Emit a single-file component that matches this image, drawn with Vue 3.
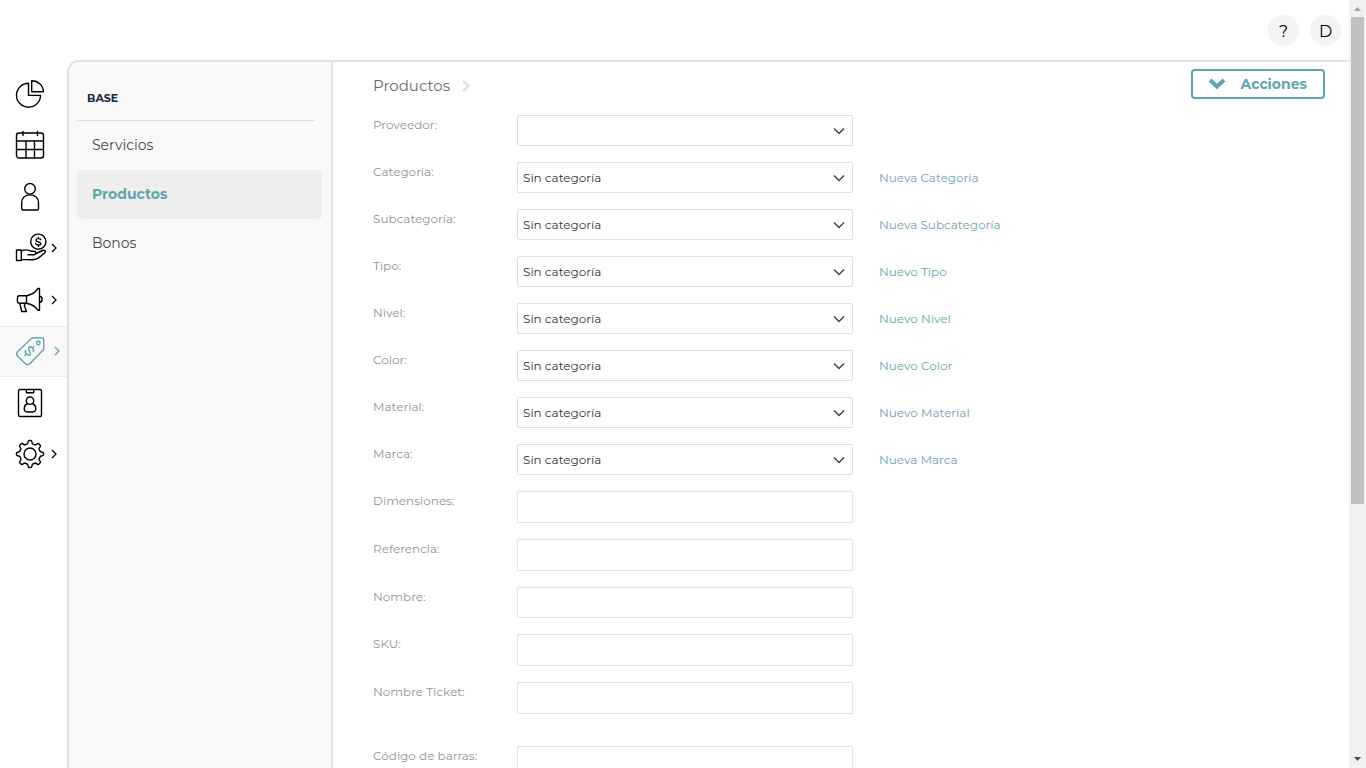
<script setup>
import { ref } from 'vue'

const railItems = [
  { id: 'stats', label: 'Estadísticas' },
  { id: 'calendar', label: 'Agenda' },
  { id: 'clients', label: 'Clientes' },
  { id: 'sales', label: 'Ventas', more: true },
  { id: 'marketing', label: 'Marketing', more: true },
  { id: 'catalog', label: 'Catálogo', more: true, active: true },
  { id: 'staff', label: 'Personal' },
  { id: 'settings', label: 'Configuración', more: true },
]

const menu = [
  { label: 'Servicios' },
  { label: 'Productos', active: true },
  { label: 'Bonos' },
]

const selects = ref([
  { id: 'proveedor', label: 'Proveedor:', value: '' },
  { id: 'categoria', label: 'Categoria:', value: 'Sin categoría', link: 'Nueva Categoria' },
  { id: 'subcategoria', label: 'Subcategoría:', value: 'Sin categoría', link: 'Nueva Subcategoría' },
  { id: 'tipo', label: 'Tipo:', value: 'Sin categoría', link: 'Nuevo Tipo' },
  { id: 'nivel', label: 'Nivel:', value: 'Sin categoría', link: 'Nuevo Nivel' },
  { id: 'color', label: 'Color:', value: 'Sin categoría', link: 'Nuevo Color' },
  { id: 'material', label: 'Material:', value: 'Sin categoría', link: 'Nuevo Material' },
  { id: 'marca', label: 'Marca:', value: 'Sin categoría', link: 'Nueva Marca' },
])

const inputs = ref([
  { id: 'dimensiones', label: 'Dimensiones:', value: '' },
  { id: 'referencia', label: 'Referencia:', value: '' },
  { id: 'nombre', label: 'Nombre:', value: '', compact: true },
  { id: 'sku', label: 'SKU:', value: '' },
  { id: 'ticket', label: 'Nombre Ticket:', value: '' },
  { id: 'barras', label: 'Código de barras:', value: '', spaced: true },
])
</script>

<template>
  <div class="window">
    <div class="page">
      <header class="topbar">
        <button class="round" type="button">?</button>
        <button class="round" type="button">D</button>
      </header>

      <div class="body">
        <nav class="rail">
          <a
            v-for="item in railItems"
            :key="item.id"
            href="#"
            class="rail-item"
            :class="{ active: item.active }"
            :aria-label="item.label"
          >
            <svg class="icon" viewBox="0 0 30 30" fill="none" stroke="currentColor" stroke-width="1.4" stroke-linecap="round" stroke-linejoin="round">
              <template v-if="item.id === 'stats'">
                <path d="M13.500 4.200A12 12 0 1 0 25.500 16.400H13.500Z" />
                <path d="M16.700 1.700V12.800H28.400C28.400 6.600 23.200 1.700 16.700 1.700Z" />
              </template>
              <template v-else-if="item.id === 'calendar'">
                <rect x="1.500" y="3" width="27" height="25" rx="2.500" />
                <path d="M1.500 11H28.500M1.500 19.500H28.500M11 11V28M19.500 11V28M8 1.500V5.500M22.500 1.500V5.500" />
              </template>
              <template v-else-if="item.id === 'clients'">
                <circle cx="15" cy="6.800" r="5.300" />
                <path d="M6.700 24.500V20.500C6.700 16 10 12.900 15 12.900S23.500 16 23.500 20.500V26.500Q23.500 28 22 28H8.200Q6.700 28 6.700 26.500Z" />
              </template>
              <template v-else-if="item.id === 'sales'">
                <circle cx="23.300" cy="8.700" r="7.600" />
                <path d="M25.800 6.700C25.300 5.300 21 5.200 20.900 7.200S25.900 8.700 25.900 10.700 21.200 12.300 20.700 10.700M23.400 4.200V5.500M23.400 12V13.300" />
                <path d="M1.500 17H6.300V27.500H1.500ZM6.300 18.200C10 15.500 13 17 16 18.200H19C21.500 18.500 21.300 21.700 19 21.700H13M21 20.500L27.500 17.500C30.300 16.500 31.200 18.500 29.300 20.200C26 23 23.500 26 19.500 26.500C15 27 11.500 26.500 6.300 26.500" />
              </template>
              <template v-else-if="item.id === 'marketing'">
                <path d="M4 10.800H11.500V18.200H4C1.800 18.200 1.800 10.800 4 10.800Z" />
                <path d="M11.500 10.800C17 9.800 20.500 7 23 3.500H24.500V25.300H23C20.500 21.500 17 19.200 11.500 18.200M24.500 11.200C28 11.200 28 17.500 24.500 17.500" />
                <path d="M4.800 18.400L6.700 26.500H11.500L9.300 20.500L10.300 18.300" />
              </template>
              <template v-else-if="item.id === 'catalog'">
                <path d="M18.200 1.800L27 1.700Q28.700 1.700 28.700 3.300V12.500Q28.700 13.500 27.800 14.300L15 27.500Q12.500 29.700 10.200 27.500L2.700 20.200Q.600 17.800 2.700 15.500L16.500 2.600Q17.300 1.800 18.200 1.800Z" />
                <circle cx="23.300" cy="7" r="1.700" />
                <g transform="rotate(45 14.500 15)">
                  <path d="M17.500 12.700C17.200 10.300 11.500 10.300 11.500 12.800S17.600 14.700 17.600 17.300 11.800 19.700 11.400 17.300M14.500 8.800V10.900M14.500 19.200V21.300" />
                </g>
              </template>
              <template v-else-if="item.id === 'staff'">
                <rect x="3.500" y="1.500" width="23" height="27" rx="1.500" />
                <path d="M11.300 1.500V4.700H18.700V1.500" />
                <circle cx="15" cy="12.700" r="3.700" />
                <path d="M12.600 15.500C8.500 17.200 7.800 24 12.300 24H17.700C22.200 24 21.500 17.200 17.400 15.500" />
              </template>
              <template v-else>
                <circle cx="15" cy="15" r="6" />
                <path d="M12.500 4.800C13 4.500 13 1.500 14 1.500H16C17 1.500 17 4.500 17.500 4.800C18.300 5.100 19.500 5.700 20.300 6C21 6 22.500 4 23.500 4.600L25.400 6.500C26 7.500 24 9 24 9.700C24.300 10.500 24.900 11.700 25.200 12.500C25.500 13 28.500 13 28.500 14V16C28.500 17 25.500 17 25.200 17.500C24.900 18.300 24.300 19.500 24 20.300C24 21 26 22.500 25.400 23.500L23.500 25.400C22.500 26 21 24 20.300 24C19.500 24.300 18.300 24.900 17.500 25.200C17 25.500 17 28.500 16 28.500H14C13 28.500 13 25.500 12.500 25.200C11.700 24.900 10.500 24.300 9.700 24C9 24 7.500 26 6.500 25.400L4.600 23.500C4 22.500 6 21 6 20.300C5.700 19.500 5.100 18.300 4.800 17.500C4.500 17 1.500 17 1.500 16V14C1.500 13 4.500 13 4.800 12.500C5.100 11.700 5.700 10.500 6 9.700C6 9 4 7.500 4.600 6.500L6.500 4.600C7.500 4 9 6 9.700 6C10.500 5.700 11.700 5.100 12.500 4.800Z" />
              </template>
            </svg>
            <svg v-if="item.more" class="more" viewBox="0 0 6 10" fill="none" stroke="currentColor" stroke-width="1.300">
              <path d="M1 1L5 5L1 9" />
            </svg>
          </a>
        </nav>

        <div class="panel">
          <aside class="submenu">
            <h2 class="submenu-title">BASE</h2>
            <a v-for="m in menu" :key="m.label" href="#" class="submenu-item" :class="{ active: m.active }">{{ m.label }}</a>
          </aside>

          <main class="content">
            <div class="heading">
              <div class="crumbs">
                <h1 class="title">Productos</h1>
                <svg class="crumb-arrow" viewBox="0 0 8 12" fill="none" stroke="currentColor" stroke-width="2">
                  <path d="M1 1L6.500 6L1 11" />
                </svg>
              </div>
              <button class="actions" type="button">
                <svg class="actions-arrow" viewBox="0 0 18 12" fill="none" stroke="currentColor" stroke-width="4">
                  <path d="M2 2L9 8.500L16 2" />
                </svg>
                <span>Acciones</span>
              </button>
            </div>

            <form class="form" @submit.prevent>
              <div v-for="f in selects" :key="f.id" class="row">
                <label class="label" :for="f.id">{{ f.label }}</label>
                <div class="select-box">
                  <select :id="f.id" v-model="f.value" class="field select">
                    <option :value="f.value">{{ f.value }}</option>
                  </select>
                  <svg class="caret" viewBox="0 0 12 8" fill="none" stroke="currentColor" stroke-width="1.500">
                    <path d="M1 1.500L6 6.500L11 1.500" />
                  </svg>
                </div>
                <a v-if="f.link" href="#" class="link">{{ f.link }}</a>
              </div>
              <div v-for="f in inputs" :key="f.id" class="row" :class="{ spaced: f.spaced }">
                <label class="label" :for="f.id">{{ f.label }}</label>
                <input :id="f.id" v-model="f.value" type="text" class="field input" :class="{ compact: f.compact }" />
              </div>
            </form>
          </main>
        </div>
      </div>
    </div>

    <div class="scrollbar" aria-hidden="true">
      <svg class="scroll-arrow" viewBox="0 0 17 17"><path d="M5 11H12L8.500 7Z" fill="#a3a3a3" /></svg>
      <div class="track"><div class="thumb"></div></div>
      <svg class="scroll-arrow" viewBox="0 0 17 17"><path d="M5 6H12L8.500 10Z" fill="#505050" /></svg>
    </div>
  </div>
</template>

<style>
body {
  overflow: hidden;
}
</style>

<style scoped>
.window {
  display: flex;
  height: 100vh;
  background: #fff;
  font-family: Montserrat, Inter, "Liberation Sans", sans-serif;
  font-weight: 400;
  color: #333;
}
.window *,
.window {
  box-sizing: border-box;
}
a {
  text-decoration: none;
}
button,
input,
select {
  font-family: inherit;
}
.page {
  flex: 1;
  min-width: 0;
  display: flex;
  flex-direction: column;
  overflow: hidden;
}
.topbar {
  flex: none;
  display: flex;
  align-items: center;
  justify-content: flex-end;
  gap: 11px;
  height: 60px;
  padding-right: 8px;
}
.round {
  width: 31px;
  height: 31px;
  padding: 4px 0 0;
  border: 0;
  border-radius: 50%;
  background: #f4f4f4;
  color: #000;
  font-size: 16px;
  line-height: 20px;
}
.body {
  flex: 1;
  display: flex;
  min-height: 0;
}
.rail {
  flex: none;
  display: flex;
  flex-direction: column;
  justify-content: space-between;
  width: 67px;
  height: 420px;
  padding-top: 8px;
}
.rail-item {
  display: flex;
  align-items: center;
  gap: 6px;
  height: 51px;
  padding-left: 15px;
  color: #000;
}
.rail-item.active {
  gap: 9px;
  background: #f8f8f8;
  border: solid #ececec;
  border-width: 1px 0;
  color: #61a5af;
}
.icon {
  width: 30px;
  height: 30px;
  overflow: visible;
}
.more {
  width: 6px;
  height: 10px;
}
.panel {
  flex: 1;
  min-width: 0;
  display: flex;
  border: solid #e1e1e1;
  border-width: 2px 0 0 2px;
  border-top-left-radius: 12px;
  overflow: hidden;
}
.submenu {
  flex: none;
  width: 264px;
  padding: 0 9px 0 8px;
  background: #f9f9f9;
  border-right: 2px solid #e3e3e3;
}
.submenu-title {
  margin: 0 8px 0 0;
  padding: 26px 10px 12px;
  border-bottom: 1px solid #dcdcdc;
  font-size: 11px;
  line-height: 20px;
  font-weight: 700;
  color: #14283a;
}
.submenu-item {
  display: block;
  padding: 0 15px;
  border-radius: 4px;
  font-size: 14px;
  line-height: 49px;
  font-weight: 400;
  color: #3f4a50;
}
.submenu-item.active {
  background: #eee;
  color: #61a5af;
  font-weight: 700;
}
.content {
  flex: 1;
  min-width: 0;
  padding: 7px 24px 0 40px;
}
.heading {
  display: flex;
  justify-content: space-between;
  align-items: flex-start;
}
.crumbs {
  display: flex;
  align-items: center;
  gap: 12px;
  height: 34px;
}
.title {
  margin: 0;
  font-size: 15px;
  line-height: 20px;
  font-weight: 400;
  color: #6a6a6a;
}
.crumb-arrow {
  width: 8px;
  height: 12px;
  color: #dadade;
}
.actions {
  display: flex;
  align-items: center;
  gap: 15px;
  height: 30px;
  padding: 0 16px 1px 15px;
  border: 2px solid #61a5af;
  border-radius: 4px;
  background: #fff;
  color: #61a5af;
  font-size: 14px;
  line-height: 20px;
  font-weight: 700;
}
.actions-arrow {
  width: 18px;
  height: 12px;
}
.form {
  display: flex;
  flex-direction: column;
  gap: 16px;
  padding-top: 12px;
}
.row {
  display: grid;
  grid-template-columns: 144px 336px 1fr;
  align-items: start;
}
.row.spaced {
  margin-top: 16px;
}
.label {
  font-size: 12px;
  line-height: 20px;
  font-weight: 400;
  color: #939393;
}
.select-box {
  position: relative;
}
.field {
  display: block;
  width: 100%;
  margin: 0;
  border: 1px solid #dfdfdf;
  border-radius: 2px;
  background: #fff;
  color: #333;
  font-size: 12px;
  outline: 0;
}
.select {
  appearance: none;
  height: 31px;
  padding: 0 30px 0 5px;
}
.input {
  height: 32px;
  padding: 0 6px;
  border-color: #e4e4e4;
  box-shadow: 0 0 2px #eee;
}
.input.compact {
  height: 31px;
}
.caret {
  position: absolute;
  right: 8px;
  top: 12px;
  width: 12px;
  height: 8px;
  color: #444;
  pointer-events: none;
}
.link {
  padding-left: 26px;
  font-size: 12px;
  line-height: 31px;
  font-weight: 400;
  color: #68a5ae;
}
.scrollbar {
  flex: none;
  display: flex;
  flex-direction: column;
  width: 17px;
  background: #f1f1f1;
}
.scroll-arrow {
  flex: none;
  width: 17px;
  height: 17px;
}
.track {
  flex: 1;
  padding: 0 2px;
}
.thumb {
  height: 66.4%;
  background: #c1c1c1;
}
</style>
